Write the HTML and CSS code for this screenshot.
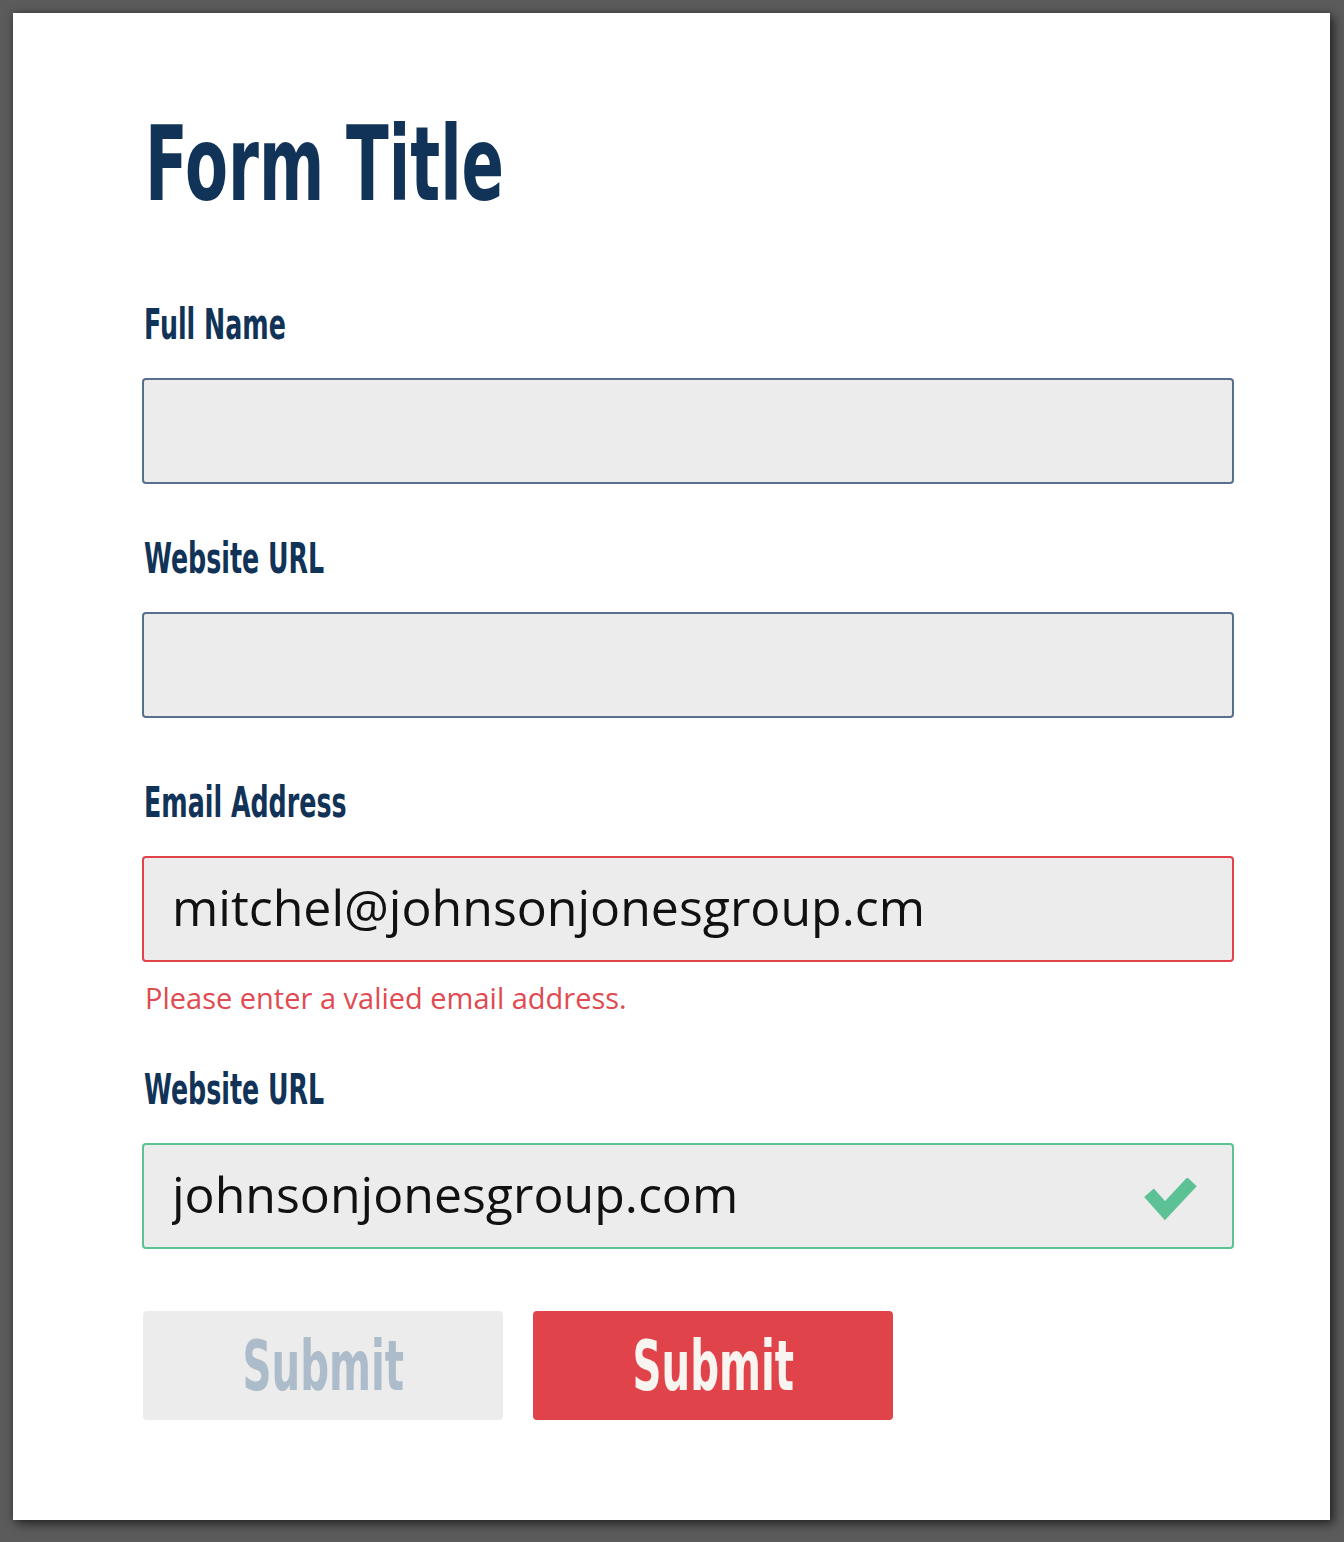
FILE: index.html
```html
<!DOCTYPE html>
<html lang="en">
<head>
<meta charset="utf-8">
<title>Form</title>
<link rel="stylesheet" href="styles.css">
</head>
<body>
<main class="card">
  <h1 class="title"><span class="squeeze">Form Title</span></h1>
  <form class="form">
    <div class="field field-first">
      <label class="label"><span class="squeeze">Full Name</span></label>
      <input class="input" type="text" value="">
    </div>
    <div class="field field-second">
      <label class="label"><span class="squeeze">Website URL</span></label>
      <input class="input" type="text" value="">
    </div>
    <div class="field field-third">
      <label class="label"><span class="squeeze">Email Address</span></label>
      <input class="input input-error" type="text" value="mitchel@johnsonjonesgroup.cm">
      <p class="error">Please enter a valied email address.</p>
    </div>
    <div class="field field-fourth">
      <label class="label"><span class="squeeze">Website URL</span></label>
      <div class="input-wrap">
        <input class="input input-valid" type="text" value="johnsonjonesgroup.com">
        <svg class="check" width="56" height="44" viewBox="0 0 56 44" aria-hidden="true">
          <polyline points="7,14.7 23,32.7 50,3.7" fill="none" stroke="#5cc295" stroke-width="13"/>
        </svg>
      </div>
    </div>
    <div class="actions">
      <button type="button" class="btn btn-disabled"><span class="squeeze">Submit</span></button>
      <button type="button" class="btn btn-primary"><span class="squeeze">Submit</span></button>
    </div>
  </form>
</main>
</body>
</html>
```
FILE: styles.css
```css
html, body {
  margin: 0;
  padding: 0;
}
body {
  background: #5b5b5b;
  padding: 13px 14px 22px 13px;
  min-height: 1542px;
  box-sizing: border-box;
}
.card {
  width: 1317px;
  height: 1507px;
  box-sizing: border-box;
  background: #ffffff;
  box-shadow: 4px 4px 10px rgba(0, 0, 0, 0.55), 0 0 6px rgba(0, 0, 0, 0.25);
  padding: 100px 96px 0 129px;
}
.squeeze {
  display: inline-block;
  transform: scaleX(0.67);
  transform-origin: left center;
  white-space: nowrap;
}
.title {
  margin: 0;
  font-family: "Liberation Sans Narrow", "DejaVu Sans Condensed", "Liberation Sans", sans-serif;
  font-weight: 700;
  font-size: 103px;
  line-height: 103px;
  color: #103357;
  padding-left: 3px;
}
.title .squeeze {
  transform: scaleX(0.676);
}
.form {
  display: flex;
  flex-direction: column;
}
.field {
  display: flex;
  flex-direction: column;
}
.field-first { margin-top: 88px; }
.field-second { margin-top: 54px; }
.field-third { margin-top: 64px; }
.field-fourth { margin-top: 53px; }
.label {
  font-family: "Liberation Sans Narrow", "DejaVu Sans Condensed", "Liberation Sans", sans-serif;
  font-weight: 700;
  font-size: 42px;
  line-height: 42px;
  color: #103357;
  margin-bottom: 32px;
  padding-left: 2px;
}
.input {
  display: block;
  width: 1092px;
  height: 106px;
  box-sizing: border-box;
  margin: 0;
  border: 2px solid #56708e;
  border-radius: 4px;
  background: #ececec;
  padding: 0 28px 5px 28px;
  font-family: "Open Sans", sans-serif;
  font-size: 50px;
  color: #111111;
  outline: none;
}
.input-error {
  border-color: #e0434a;
}
.input-valid {
  border-color: #5cc295;
}
.error {
  margin: 18px 0 0 3px;
  font-family: "Open Sans", sans-serif;
  font-size: 29px;
  line-height: 36px;
  color: #e04a50;
}
.input-wrap {
  position: relative;
}
.check {
  position: absolute;
  left: 1000px;
  top: 35px;
}
.actions {
  display: flex;
  gap: 30px;
  margin-top: 62px;
  padding-left: 1px;
}
.btn {
  width: 360px;
  height: 109px;
  border: none;
  border-radius: 4px;
  font-family: "Liberation Sans Narrow", "DejaVu Sans Condensed", "Liberation Sans", sans-serif;
  font-weight: 700;
  font-size: 70px;
  line-height: 70px;
  padding: 0;
  display: flex;
  align-items: center;
  justify-content: center;
}
.btn .squeeze {
  transform: scaleX(0.64);
  transform-origin: center center;
}
.btn-disabled {
  background: #ececec;
  color: #acbccb;
}
.btn-primary {
  background: #e04349;
  color: #f8f4f0;
}
```
